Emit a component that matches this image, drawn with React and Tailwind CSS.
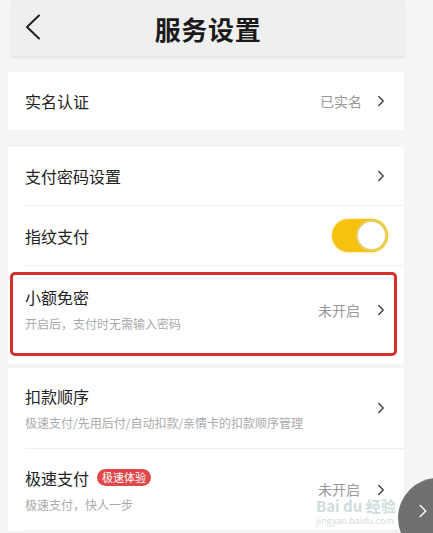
import { ChevronRight } from "lucide-react";

const font = { fontFamily: '"Noto Sans CJK SC", "Noto Sans", sans-serif' };

function Arrow() {
  return <ChevronRight className="w-[18px] h-[18px] text-[#333]" strokeWidth={1.6} />;
}

function Toggle() {
  return (
    <div className="w-[56px] h-[33px] rounded-full bg-[#f6c20f] flex items-center justify-end pr-[1px] shadow-[0_0_3px_rgba(246,194,15,0.6)]">
      <div className="w-[31px] h-[31px] rounded-full bg-white border-2 border-[#e8cf70]" />
    </div>
  );
}

export default function App() {
  return (
    <div
      className="relative w-[433px] h-[533px] overflow-hidden bg-[#f5f5f5] text-[#222]"
      style={font}
    >
      <div className="w-[396px] ml-[8px] flex flex-col">
        <header className="ml-[4px] h-[56px] bg-[#efefef] shadow-[0_2px_3px_rgba(0,0,0,0.08)] flex items-center relative">
          <svg className="absolute left-[12px] top-[14px]" width="18" height="26" viewBox="0 0 18 26" fill="none">
            <polyline points="15,1.5 3,13 15,24.5" stroke="#222" strokeWidth="2" strokeLinecap="round" strokeLinejoin="round" />
          </svg>
          <h1 className="w-full text-center text-[26px] font-bold tracking-wide text-[#1a1a1a]">
            服务设置
          </h1>
        </header>

        <div className="mt-[16px] bg-white h-[58px] flex items-center justify-between pl-[17px] pr-[14px]">
          <span className="text-[16px]">实名认证</span>
          <div className="flex items-center gap-[10px]">
            <span className="text-[14px] text-[#999]">已实名</span>
            <Arrow />
          </div>
        </div>

        <div className="mt-[17px] bg-white flex flex-col">
          <div className="ml-[17px] h-[59px] flex items-center justify-between pr-[14px] border-b border-[#efefef]">
            <span className="text-[16px]">支付密码设置</span>
            <Arrow />
          </div>
          <div className="ml-[17px] h-[60px] flex items-center justify-between pr-[16px] border-b border-[#efefef]">
            <span className="text-[16px]">指纹支付</span>
            <Toggle />
          </div>
          <div className="relative h-[98px] flex items-center justify-between pl-[17px] pr-[14px]">
            <div className="flex flex-col gap-[6px] -mt-[12px]">
              <span className="text-[16px]">小额免密</span>
              <span className="text-[12px] text-[#aaa]">开启后，支付时无需输入密码</span>
            </div>
            <div className="flex items-center gap-[12px] -mt-[10px]">
              <span className="text-[14px] text-[#999]">未开启</span>
              <Arrow />
            </div>
            <div className="absolute left-[2px] right-[7px] top-[6px] bottom-[8px] border-[3px] border-[#d42f2a] rounded-[5px]" />
          </div>
        </div>

        <div className="mt-[4px] bg-white flex flex-col">
          <div className="ml-[17px] h-[81px] flex items-center justify-between pr-[14px] border-b border-[#efefef]">
            <div className="flex flex-col gap-[6px]">
              <span className="text-[16px]">扣款顺序</span>
              <span className="text-[12px] text-[#aaa]">
                极速支付/先用后付/自动扣款/亲情卡的扣款顺序管理
              </span>
            </div>
            <Arrow />
          </div>
          <div className="ml-[17px] h-[82px] flex items-center justify-between pr-[14px] border-b border-[#efefef]">
            <div className="flex flex-col gap-[6px]">
              <div className="flex items-center gap-[8px]">
                <span className="text-[16px]">极速支付</span>
                <span className="bg-[#e0474a] text-white text-[11px] leading-none rounded-full px-[5px] py-[3px]">
                  极速体验
                </span>
              </div>
              <span className="text-[12px] text-[#aaa]">极速支付，快人一步</span>
            </div>
            <div className="flex items-center gap-[12px]">
              <span className="text-[14px] text-[#999]">未开启</span>
              <Arrow />
            </div>
          </div>
        </div>
      </div>

      <div className="absolute left-[316px] top-[498px] flex flex-col items-start opacity-40 pointer-events-none">
        <span className="text-[15px] font-bold text-[#8aa] leading-none">Bai du 经验</span>
        <span className="text-[9px] text-[#9aa] leading-none mt-[3px]">jingyan.baidu.com</span>
      </div>

      <div className="absolute left-[398px] top-[478px] w-[80px] h-[80px] rounded-full bg-[#707070] flex items-start pt-[22px] pl-[14px]">
        <ChevronRight className="w-[22px] h-[22px] text-white" strokeWidth={1.5} />
      </div>
    </div>
  );
}
